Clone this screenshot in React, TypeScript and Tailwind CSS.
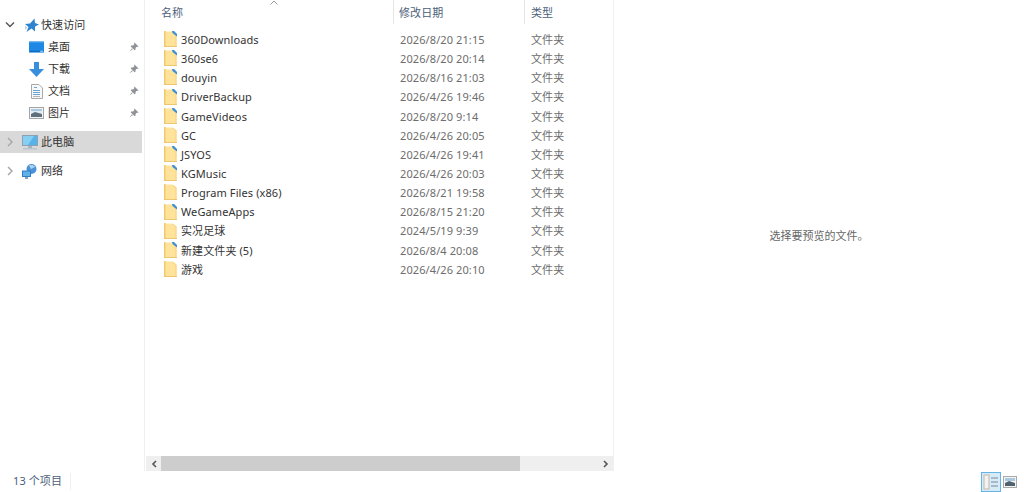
import React from "react";

const files = [
  { name: "360Downloads", date: "2026/8/20 21:15", pin: true },
  { name: "360se6", date: "2026/8/20 20:14", pin: true },
  { name: "douyin", date: "2026/8/16 21:03", pin: true },
  { name: "DriverBackup", date: "2026/4/26 19:46", pin: true },
  { name: "GameVideos", date: "2026/8/20 9:14", pin: true },
  { name: "GC", date: "2026/4/26 20:05", pin: false },
  { name: "JSYOS", date: "2026/4/26 19:41", pin: true },
  { name: "KGMusic", date: "2026/4/26 20:03", pin: true },
  { name: "Program Files (x86)", date: "2026/8/21 19:58", pin: false },
  { name: "WeGameApps", date: "2026/8/15 21:20", pin: true },
  { name: "实况足球", date: "2024/5/19 9:39", pin: false },
  { name: "新建文件夹 (5)", date: "2026/8/4 20:08", pin: true },
  { name: "游戏", date: "2026/4/26 20:10", pin: false },
];

const FolderIcon = ({ pin }: { pin: boolean }) => (
  <svg width="13" height="16" viewBox="0 0 13 16" className="shrink-0">
    <path d="M0.5 0.5H8.5L12.5 3.5V15.5H0.5Z" fill="#ffe39a" />
    <path d="M0 0H1.5V16H0Z" fill="#f0c96f" />
    <path d="M0 15H13V16H0Z" fill="#ecc76f" />
    <path d="M8.5 0.5L12.5 3.5V15H11.5V4L8.5 1.5Z" fill="#f4d483" />
    {pin && <path d="M8 0H10L13 3V5.5L11 4L8.5 2Z" fill="#3f8fd4" />}
  </svg>
);

const Pin = () => (
  <svg width="10" height="10" viewBox="0 0 10 10" className="shrink-0">
    <path d="M5.5 0.5L9.5 4.5L8.5 5L8 4.5L6.5 6L6.5 7.8L5.6 8.2L1.8 4.4L2.2 3.5L4 3.5L5.5 2L5 1.5Z" fill="#8f9297" />
    <path d="M3 6.2L0.5 9.5L3.8 7Z" fill="#8f9297" />
  </svg>
);

const ChevronDown = () => (
  <svg width="10" height="8" viewBox="0 0 10 8"><path d="M1 1.5L5 5.5L9 1.5" fill="none" stroke="#555" strokeWidth="1.4" /></svg>
);

const ChevronRight = () => (
  <svg width="8" height="10" viewBox="0 0 8 10"><path d="M2 1L6 5L2 9" fill="none" stroke="#a6a6a6" strokeWidth="1.4" /></svg>
);

const StarIcon = () => (
  <svg width="16" height="15" viewBox="0 0 16 15">
    <path d="M10.5 0.5L11 5L15 6.5L11 8.5L11 13.5L7.5 10.5L2.5 14L4.5 9L1 6L6 5.5Z" fill="#2f84cf" />
    <path d="M1 8L3 9.5L1.5 12Z" fill="#9cc8ea" />
  </svg>
);

const DesktopIcon = () => (
  <svg width="16" height="12" viewBox="0 0 16 12">
    <rect x="0" y="0" width="16" height="12" fill="#1e88e5" />
    <rect x="0" y="0" width="16" height="1" fill="#7fbdf0" />
    <rect x="1" y="10" width="14" height="1" fill="#0d5fa8" />
    <rect x="12" y="10" width="3" height="1" fill="#cfe6f8" />
  </svg>
);

const DownloadIcon = () => (
  <svg width="15" height="15" viewBox="0 0 15 15">
    <path d="M5 0H10V7H15L7.5 15L0 7H5Z" fill="#3a8fdc" />
  </svg>
);

const DocIcon = () => (
  <svg width="12" height="15" viewBox="0 0 12 15">
    <path d="M0.5 0.5H8L11.5 4V14.5H0.5Z" fill="#f8f8f8" stroke="#a9a9a9" />
    <path d="M3 3H6V4H3ZM2 6H9V7H2ZM2 8H9V9H2ZM2 10H9V11H2Z" fill="#6aa5d8" />
    <path d="M2 12H9V13H2Z" fill="#b5b5b5" />
  </svg>
);

const PictureIcon = () => (
  <svg width="15" height="12" viewBox="0 0 15 12">
    <rect x="0.5" y="0.5" width="14" height="11" fill="#f4f4f4" stroke="#a4a4a4" />
    <rect x="2" y="2" width="11" height="8" fill="#dfeaf3" />
    <path d="M2 7L6 5L13 7V10H2Z" fill="#5f6f7c" />
    <path d="M2 2H13V4H2Z" fill="#a9c9e3" />
  </svg>
);

const PcIcon = () => (
  <svg width="16" height="15" viewBox="0 0 16 15">
    <rect x="0.5" y="0.5" width="15" height="10" fill="#56b3ea" stroke="#8ba2b4" />
    <path d="M1 1H12L6 10H1Z" fill="#86cff3" />
    <rect x="6" y="11" width="4" height="2" fill="#a3b5c3" />
    <rect x="1" y="13" width="14" height="1.5" fill="#b9c6d1" />
  </svg>
);

const NetworkIcon = () => (
  <svg width="15" height="15" viewBox="0 0 15 15">
    <circle cx="9.5" cy="5" r="5" fill="#4b93d6" />
    <path d="M7 1.5C9 0.5 12 1 13 3L9 5Z" fill="#a8d3f2" />
    <rect x="0" y="6.5" width="9" height="6.5" fill="#2f7fc7" />
    <rect x="1" y="7.5" width="7" height="4.5" fill="#62b0e8" />
    <rect x="3" y="13" width="3" height="2" fill="#8aa0b2" />
  </svg>
);

const QuickItem = ({ icon, label }: { icon: React.ReactNode; label: string }) => (
  <div className="flex h-[22px] items-center pl-[29px] pr-[3px]">
    <span className="flex w-[15px] shrink-0 justify-center">{icon}</span>
    <span className="ml-[4px] flex-1 pt-[1px]">{label}</span>
    <Pin />
  </div>
);

export default function App() {
  return (
    <div
      className="flex h-[492px] w-[1024px] flex-col overflow-hidden bg-white text-[11px] tracking-[0.1px] text-[#333333]"
      style={{ fontFamily: '"Noto Sans", "Noto Sans CJK SC", sans-serif' }}
    >
      <div className="flex h-[471px]">
        {/* nav pane */}
        <aside className="w-[145px] shrink-0 border-r border-[#f0f0f0] pr-[2px] pt-[14px]">
          <div className="flex h-[22px] items-center pl-[5px]">
            <ChevronDown />
            <span className="ml-[9px]"><StarIcon /></span>
            <span className="ml-[1px] pt-[1px]">快速访问</span>
          </div>
          <QuickItem icon={<DesktopIcon />} label="桌面" />
          <QuickItem icon={<DownloadIcon />} label="下载" />
          <QuickItem icon={<DocIcon />} label="文档" />
          <QuickItem icon={<PictureIcon />} label="图片" />
          <div className="mt-[7px] flex h-[22px] items-center bg-[#d9d9d9] pl-[6px]">
            <ChevronRight />
            <span className="ml-[8px]"><PcIcon /></span>
            <span className="ml-[3px] pt-[1px]">此电脑</span>
          </div>
          <div className="mt-[7px] flex h-[22px] items-center pl-[6px]">
            <ChevronRight />
            <span className="ml-[8px]"><NetworkIcon /></span>
            <span className="ml-[4px] pt-[1px]">网络</span>
          </div>
        </aside>

        {/* file list */}
        <main className="flex w-[469px] shrink-0 flex-col border-r border-[#f0f0f0]">
          <div className="relative flex h-[24px] shrink-0 text-[#4c607a]">
            <div className="flex w-[249px] items-center border-r border-[#e5e5e5] pl-[16px] pt-[2px]">名称</div>
            <div className="flex w-[131px] items-center border-r border-[#e5e5e5] pl-[5px] pt-[2px]">修改日期</div>
            <div className="flex items-center pl-[6px] pt-[2px]">类型</div>
            <svg width="8" height="5" viewBox="0 0 8 5" className="absolute left-[125px] top-0">
              <path d="M0.5 4.5L4 1L7.5 4.5" fill="none" stroke="#a0a0a0" />
            </svg>
          </div>
          <div className="flex-1 pt-[5.6px]">
            {files.map((file) => (
              <div key={file.name} className="flex h-[19.17px] items-center">
                <div className="flex w-[255px] items-center pl-[19px]">
                  <FolderIcon pin={file.pin} />
                  <span className="ml-[4px] pt-[2px] text-[#333333]">{file.name}</span>
                </div>
                <div className="w-[131px] pt-[2px] text-[#6d6d6d]">{file.date}</div>
                <div className="pt-[2px] text-[#6d6d6d]">文件夹</div>
              </div>
            ))}
          </div>
          <div className="ml-px flex h-[15px] shrink-0 items-center bg-[#efefef]">
            <div className="flex h-full w-[15px] items-center justify-center">
              <svg width="6" height="8" viewBox="0 0 6 8"><path d="M5 1L2 4L5 7" fill="none" stroke="#555" strokeWidth="1.6" /></svg>
            </div>
            <div className="h-full w-[359px] bg-[#cdcdcd]" />
            <div className="flex h-full flex-1 items-center justify-end pr-[4px]">
              <svg width="6" height="8" viewBox="0 0 6 8"><path d="M1 1L4 4L1 7" fill="none" stroke="#555" strokeWidth="1.6" /></svg>
            </div>
          </div>
        </main>

        {/* preview pane */}
        <section className="flex flex-1 items-center justify-center pt-[2px] tracking-normal text-[#666666]">
          选择要预览的文件。
        </section>
      </div>

      {/* status bar */}
      <footer className="flex h-[21px] shrink-0 items-center pl-[13px] pr-[7px] text-[#4c607a]">
        <span className="w-[58px] border-r border-[#f0f0f0]">13 个项目</span>
        <div className="ml-auto flex items-center gap-[2px]">
          <div className="flex h-[20px] w-[20px] items-center justify-center border border-[#66b3e6] bg-[#d5ebf9]">
            <svg width="16" height="16" viewBox="0 0 16 16">
              <rect x="1" y="1" width="5" height="14" fill="#f2f2f2" stroke="#c4b9a8" />
              <path d="M8 4H15M8 8H15M8 12H15" stroke="#7d8791" strokeWidth="1.2" />
            </svg>
          </div>
          <svg width="14" height="12" viewBox="0 0 14 12">
            <rect x="0.5" y="0.5" width="13" height="11" fill="#f4f4f4" stroke="#aaaaaa" />
            <path d="M2 2H12V5H2Z" fill="#a9c9e3" />
            <path d="M2 7L6 5L12 7V10H2Z" fill="#4f6270" />
          </svg>
        </div>
      </footer>
    </div>
  );
}
